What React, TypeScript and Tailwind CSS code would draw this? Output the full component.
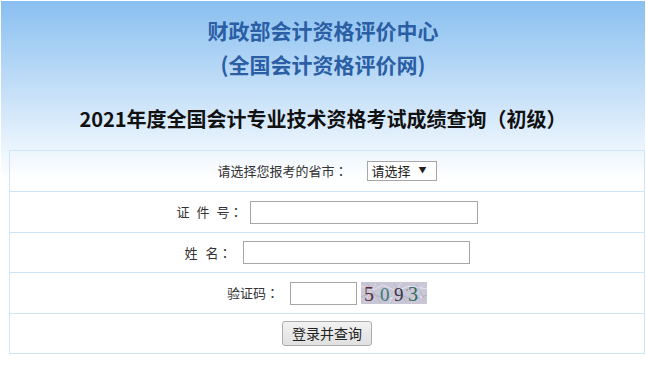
import React from "react";

const cjk = { fontFamily: '"Noto Sans CJK SC", "Noto Sans", sans-serif' };
const tc = { fontFamily: '"Noto Sans CJK TC", "Noto Sans CJK SC", sans-serif' };

function Colon() {
  return <span style={tc}>：</span>;
}

function Captcha() {
  return (
    <svg width="66" height="22" viewBox="0 0 66 22" className="block">
      <rect width="66" height="22" fill="#c9c7d6" />
      <path d="M0 4 L12 8 L22 3 L35 9 L48 4 L66 7" stroke="#e6e4ef" strokeWidth="1" fill="none" />
      <path d="M0 15 L10 11 L24 17 L38 12 L52 18 L66 13" stroke="#aeb0c4" strokeWidth="1" fill="none" />
      <path d="M3 20 L15 2 M28 21 L40 1 M50 21 L62 3" stroke="#dcdae6" strokeWidth="1" />
      <path d="M6 1 L20 21 M33 1 L45 20 M55 2 L64 18" stroke="#b4b2c6" strokeWidth="0.8" />
      <circle cx="9" cy="6" r="1" fill="#9a98b0" />
      <circle cx="30" cy="16" r="1" fill="#eeeeee" />
      <circle cx="46" cy="8" r="1" fill="#9a98b0" />
      <circle cx="60" cy="15" r="1" fill="#eeeeee" />
      <text x="3" y="19" fontFamily='"Liberation Serif", serif' fontSize="20" fill="#5a2a3a">5</text>
      <text x="19" y="19" fontFamily='"Liberation Serif", serif' fontSize="19" fill="#3f7a78">0</text>
      <text x="33" y="19" fontFamily='"Liberation Serif", serif' fontSize="19" fill="#3a3448">9</text>
      <text x="47" y="19" fontFamily='"Liberation Serif", serif' fontSize="20" fill="#2f6a5c">3</text>
    </svg>
  );
}

export default function App() {
  return (
    <div className="w-[646px] h-[367px] bg-white p-px pb-0" style={cjk}>
      <div className="w-[644px] h-[366px] bg-[linear-gradient(to_bottom,#89bff0_0px,#fbfdff_172px,#ffffff_180px)] flex flex-col">
        <div className="h-[149px] flex flex-col items-center">
          <div className="mt-[13px] h-[32px] text-[21px] leading-[32px] font-bold text-[#2a5ea5]">财政部会计资格评价中心</div>
          <div className="mt-[2px] h-[32px] text-[21px] leading-[32px] font-bold text-[#2a5ea5]">(全国会计资格评价网)</div>
          <div className="mt-[24px] h-[30px] text-[20px] leading-[30px] font-bold text-[#111]">2021年度全国会计专业技术资格考试成绩查询（初级）</div>
        </div>
        <div className="ml-2 border border-[#cde5f6] text-[13px] text-[#333]">
          <div className="h-[41px] border-b border-[#cde5f6] flex items-center justify-center">
            <span className="mr-[19px]">请选择您报考的省市<Colon /></span>
            <div className="w-[70px] h-[20px] border border-[#a6a6a6] bg-white flex items-center pl-[4px] text-[13px] text-[#222]">
              <span>请选择</span>
              <span className="ml-[8px] text-[8px] -mt-[3px]">▼</span>
            </div>
          </div>
          <div className="h-[41px] border-b border-[#cde5f6] flex items-center justify-center">
            <span className="mr-[7px]">证</span>
            <span className="mr-[7px]">件</span>
            <span className="mr-[7px]">号<Colon /></span>
            <div className="w-[228px] h-[23px] border border-[#a6a6a6] bg-white" />
          </div>
          <div className="h-[40px] border-b border-[#cde5f6] flex items-center justify-center">
            <span className="mr-[8px]">姓</span>
            <span className="mr-[11px]">名<Colon /></span>
            <div className="w-[227px] h-[23px] border border-[#a6a6a6] bg-white" />
          </div>
          <div className="h-[41px] border-b border-[#cde5f6] flex items-center justify-center">
            <span className="mr-[11px]">验证码<Colon /></span>
            <div className="w-[67px] h-[23px] border border-[#a6a6a6] bg-white mr-[4px]" />
            <Captcha />
          </div>
          <div className="h-[39px] flex items-center justify-center">
            <div className="w-[90px] h-[25px] -mt-[1px] border border-[#acacac] rounded-[3px] bg-[linear-gradient(to_bottom,#f2f2f2,#e0e0e0)] flex items-center justify-center text-[14px] text-[#222]">
              登录并查询
            </div>
          </div>
        </div>
      </div>
    </div>
  );
}
